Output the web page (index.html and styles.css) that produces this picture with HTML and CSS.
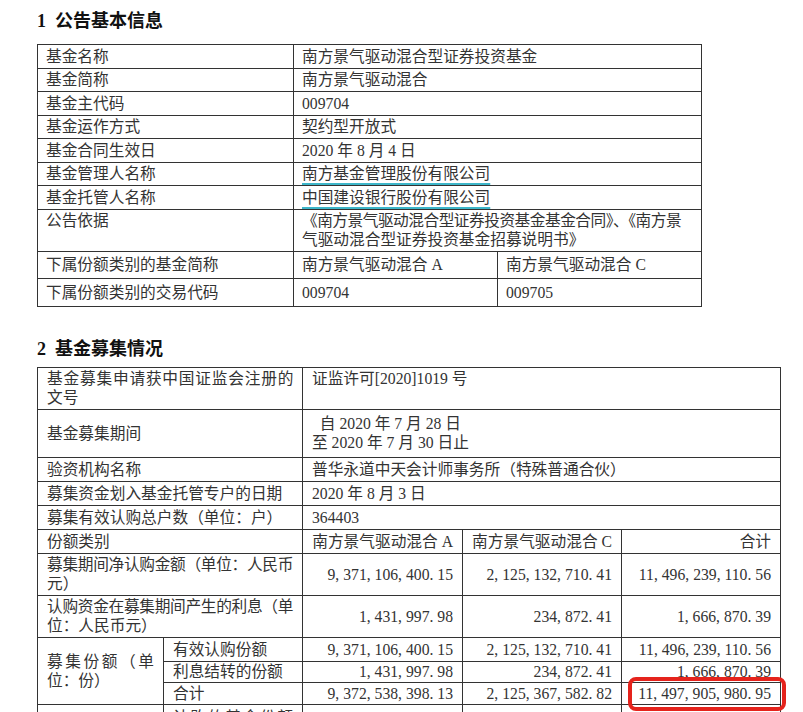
FILE: index.html
```html
<!DOCTYPE html>
<html lang="zh-CN">
<head>
<meta charset="utf-8">
<title>基金募集情况</title>
<link rel="stylesheet" href="styles.css">
</head>
<body>
<div class="doc">
  <h2 class="sec-title first"><span class="num">1</span>公告基本信息</h2>
  <table class="grid t1">
    <colgroup><col class="w256"><col class="w204"><col class="w204"></colgroup>
    <tr><td>基金名称</td><td colspan="2">南方景气驱动混合型证券投资基金</td></tr>
    <tr><td>基金简称</td><td colspan="2">南方景气驱动混合</td></tr>
    <tr><td>基金主代码</td><td colspan="2">009704</td></tr>
    <tr><td>基金运作方式</td><td colspan="2">契约型开放式</td></tr>
    <tr><td>基金合同生效日</td><td colspan="2">2020 年 8 月 4 日</td></tr>
    <tr><td>基金管理人名称</td><td colspan="2"><span class="link">南方基金管理股份有限公司</span></td></tr>
    <tr><td>基金托管人名称</td><td colspan="2"><span class="link">中国建设银行股份有限公司</span></td></tr>
    <tr class="top two"><td>公告依据</td><td colspan="2"><span class="line1">《南方景气驱动混合型证券投资基金基金合同》、《南方景</span>气驱动混合型证券投资基金招募说明书》</td></tr>
    <tr class="tall"><td>下属份额类别的基金简称</td><td>南方景气驱动混合 A</td><td>南方景气驱动混合 C</td></tr>
    <tr class="tall"><td>下属份额类别的交易代码</td><td>009704</td><td>009705</td></tr>
  </table>

  <h2 class="sec-title second"><span class="num">2</span>基金募集情况</h2>
  <table class="grid t2">
    <colgroup><col class="w126"><col class="w139"><col class="w160"><col class="w159"><col class="w159"></colgroup>
    <tr class="top two"><td colspan="2"><span class="fill">基金募集申请获中国证监会注册的</span>文号</td><td colspan="3">证监许可[2020]1019 号</td></tr>
    <tr class="r48"><td colspan="2">基金募集期间</td><td colspan="3">&ensp;自 2020 年 7 月 28 日<br>至 2020 年 7 月 30 日止</td></tr>
    <tr><td colspan="2">验资机构名称</td><td colspan="3">普华永道中天会计师事务所（特殊普通合伙）</td></tr>
    <tr><td colspan="2">募集资金划入基金托管专户的日期</td><td colspan="3">2020 年 8 月 3 日</td></tr>
    <tr><td colspan="2">募集有效认购总户数（单位：户）</td><td colspan="3">364403</td></tr>
    <tr><td colspan="2">份额类别</td><td class="val">南方景气驱动混合 A</td><td class="val">南方景气驱动混合 C</td><td class="val">合计</td></tr>
    <tr class="two"><td colspan="2"><span class="fill">募集期间净认购金额（单位：人民币</span>元）</td><td class="val">9, 371, 106, 400. 15</td><td class="val">2, 125, 132, 710. 41</td><td class="val">11, 496, 239, 110. 56</td></tr>
    <tr class="two"><td colspan="2"><span class="fill">认购资金在募集期间产生的利息（单</span>位：人民币元）</td><td class="val">1, 431, 997. 98</td><td class="val">234, 872. 41</td><td class="val">1, 666, 870. 39</td></tr>
    <tr><td rowspan="3" class="just">募集份额（单位：份）</td><td>有效认购份额</td><td class="val">9, 371, 106, 400. 15</td><td class="val">2, 125, 132, 710. 41</td><td class="val">11, 496, 239, 110. 56</td></tr>
    <tr class="tighter"><td>利息结转的份额</td><td class="val">1, 431, 997. 98</td><td class="val">234, 872. 41</td><td class="val">1, 666, 870. 39</td></tr>
    <tr class="tight"><td>合计</td><td class="val">9, 372, 538, 398. 13</td><td class="val">2, 125, 367, 582. 82</td><td class="val total">11, 497, 905, 980. 95<span class="mark"></span></td></tr>
    <tr class="last"><td></td><td class="just at-top">认购的基金份额（单位：份）</td><td></td><td></td><td></td></tr>
  </table>
</div>
</body>
</html>
```
FILE: styles.css
```css
* { box-sizing: border-box; }

body {
  margin: 0;
  background: #fff;
  font-family: "Liberation Serif", "Noto Sans CJK SC", serif;
  color: #333;
}

.doc {
  padding: 9px 0 40px 37px;
}

.sec-title {
  margin: 0;
  font-size: 18px;
  line-height: 24px;
  font-weight: bold;
  color: #111;
}

.sec-title .num { margin-right: 9px; }
.sec-title.first { margin-bottom: 11px; }
.sec-title.second { margin-top: 30px; margin-bottom: 6px; }

.grid {
  border-collapse: collapse;
  table-layout: fixed;
  font-size: 15.7px;
}

.grid td {
  border: 1px solid #333;
  vertical-align: middle;
  text-align: left;
}

.t1 { width: 664px; }
.t1 td { padding: 1.5px 8px; line-height: 19.5px; }
.t1 .two td { line-height: 19px; padding-top: 1.5px; padding-bottom: 1.5px; }
.t1 .tall td { padding-top: 3.5px; padding-bottom: 3.5px; }

.t2 { width: 743px; }
.t2 td { padding: 2px 9px; line-height: 19px; }
.t2 .two td { padding-top: 1.5px; padding-bottom: 1.5px; }
.t2 .r48 td { padding-top: 4.5px; padding-bottom: 4.5px; }
.t2 .tight td { padding-top: 1px; padding-bottom: 1px; }
.t2 .tighter td { padding-top: 0.5px; padding-bottom: 0.5px; }
.t2 .last td { padding-top: 3px; }

.w256 { width: 256px; }
.w204 { width: 204px; }
.w126 { width: 126px; }
.w139 { width: 139px; }
.w160 { width: 160px; }
.w159 { width: 159px; }

.grid .top td,
.grid td.at-top { vertical-align: top; }

.link {
  text-decoration: underline;
  text-decoration-color: #3db6c9;
  text-decoration-thickness: 2px;
  text-underline-offset: 4px;
}

.line1 {
  display: block;
  white-space: nowrap;
  letter-spacing: -0.5px;
}

.fill {
  display: block;
  letter-spacing: -0.4px;
  text-align: justify;
  text-align-last: justify;
}

.grid td.just { text-align: justify; }

.grid td.val {
  text-align: right;
  white-space: nowrap;
}

.grid td.total { position: relative; }

.mark {
  position: absolute;
  left: 6px;
  right: -6px;
  top: -6px;
  bottom: -7px;
  border: 4px solid #e5231c;
  border-radius: 8px;
  pointer-events: none;
}
```
